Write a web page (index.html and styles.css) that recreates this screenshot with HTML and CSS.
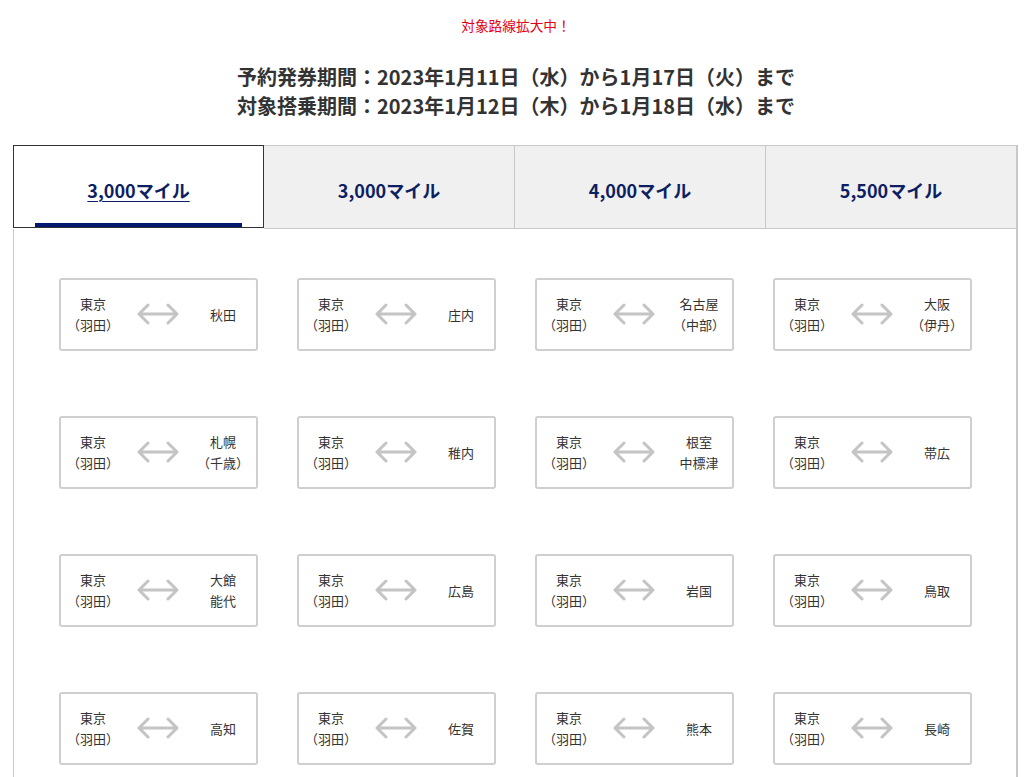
FILE: index.html
```html
<!DOCTYPE html>
<html lang="ja">
<head>
<meta charset="utf-8">
<title>対象路線</title>
<link rel="stylesheet" href="styles.css">
</head>
<body>
<p class="notice">対象路線拡大中！</p>
<div class="periods">
  <p>予約発券期間：2023年1月11日（水）から1月17日（火）まで</p>
  <p>対象搭乗期間：2023年1月12日（木）から1月18日（水）まで</p>
</div>
<div class="tabs-wrap">
  <div class="tabs">
    <div class="tab active"><span>3,000マイル</span></div>
    <div class="tab"><span>3,000マイル</span></div>
    <div class="tab"><span>4,000マイル</span></div>
    <div class="tab"><span>5,500マイル</span></div>
  </div>
  <div class="panel">
    <div class="grid" id="grid"></div>
  </div>
</div>
<script>
(function(){
  var dests = [
    ["秋田"],["庄内"],["名古屋","（中部）"],["大阪","（伊丹）"],
    ["札幌","（千歳）"],["稚内"],["根室","中標津"],["帯広"],
    ["大館","能代"],["広島"],["岩国"],["鳥取"],
    ["高知"],["佐賀"],["熊本"],["長崎"]
  ];
  var arrow = '<svg class="arrow" viewBox="0 0 44 22" width="44" height="22"><path d="M3 11H41M12 2L3 11L12 20M32 2L41 11L32 20" fill="none" stroke="#c4c4c4" stroke-width="3" stroke-linecap="round" stroke-linejoin="round"/></svg>';
  var html = "";
  dests.forEach(function(d){
    html += '<div class="card"><div class="city">東京<br>（羽田）</div><div class="mid">' + arrow + '</div><div class="city">' + d.join("<br>") + '</div></div>';
  });
  document.getElementById("grid").innerHTML = html;
})();
</script>
</body>
</html>
```

FILE: styles.css
```css
* { box-sizing: border-box; }
html, body { margin: 0; padding: 0; background: #fff; }
body {
  font-family: "Noto Sans CJK JP", "Noto Sans", sans-serif;
  color: #333;
}
.notice {
  margin: 0;
  padding-top: 15px;
  text-align: center;
  font-size: 13.7px;
  line-height: 20px;
  color: #e50012;
}
.periods {
  margin-top: 27px;
  text-align: center;
  font-size: 20px;
  font-weight: bold;
  line-height: 29px;
  color: #333;
}
.periods p { margin: 0; }
.tabs-wrap {
  margin: 25px 14px 0 13px;
}
.tabs {
  display: grid;
  grid-template-columns: 251px 251px 251px 252px;
}
.tab {
  height: 84px;
  padding-top: 6px;
  background: #f0f0f0;
  border-top: 1px solid #c8c8c8;
  border-right: 1px solid #c8c8c8;
  border-bottom: 1px solid #c8c8c8;
  display: flex;
  align-items: center;
  justify-content: center;
  font-size: 18px;
  font-weight: bold;
  color: #0d1f63;
  position: relative;
}
.tab:last-child { border-right: 2px solid #c8c8c8; }
.tab.active {
  background: #fff;
  border: 1px solid #333;
  height: 83px;
}
.tab.active span {
  text-decoration: underline;
  text-underline-offset: 3px;
  text-decoration-thickness: 1px;
}
.tab.active::after {
  content: "";
  position: absolute;
  left: 21px;
  right: 21px;
  bottom: 0;
  height: 4px;
  background: #00186e;
}
.panel {
  border-left: 1px solid #c8c8c8;
  border-right: 2px solid #c8c8c8;
  padding: 49px 44px 60px 45px;
}
.grid {
  display: grid;
  grid-template-columns: repeat(4, 199px);
  column-gap: 39px;
  row-gap: 65px;
}
.card {
  height: 73px;
  border: 2px solid #cfcfcf;
  border-radius: 3px;
  display: grid;
  grid-template-columns: 64px 1fr 66px;
  align-items: center;
  padding: 0 0 1px 0;
}
.city {
  text-align: center;
  font-size: 13px;
  line-height: 21px;
  color: #333;
  white-space: nowrap;
}
.mid {
  display: flex;
  justify-content: center;
  align-items: center;
}
.arrow { display: block; }
```
